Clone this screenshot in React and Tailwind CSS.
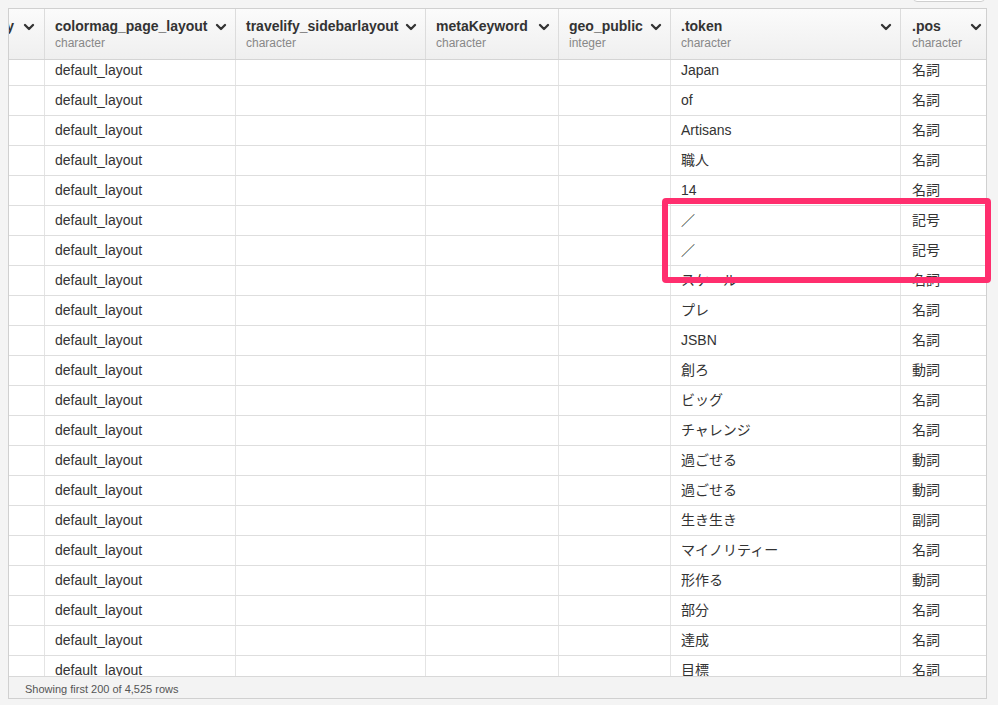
import React from 'react';
import { ChevronDown } from 'lucide-react';

const columns = [
  { name: 'colormag_page_layout', type: 'character' },
  { name: 'travelify_sidebarlayout', type: 'character' },
  { name: 'metaKeyword', type: 'character' },
  { name: 'geo_public', type: 'integer' },
  { name: '.token', type: 'character' },
  { name: '.pos', type: 'character', last: true },
];

const rows = [
  ['Japan', '名詞'],
  ['of', '名詞'],
  ['Artisans', '名詞'],
  ['職人', '名詞'],
  ['14', '名詞'],
  ['／', '記号'],
  ['／', '記号'],
  ['スケール', '名詞'],
  ['プレ', '名詞'],
  ['JSBN', '名詞'],
  ['創ろ', '動詞'],
  ['ビッグ', '名詞'],
  ['チャレンジ', '名詞'],
  ['過ごせる', '動詞'],
  ['過ごせる', '動詞'],
  ['生き生き', '副詞'],
  ['マイノリティー', '名詞'],
  ['形作る', '動詞'],
  ['部分', '名詞'],
  ['達成', '名詞'],
  ['目標', '名詞'],
];

const grid = 'grid grid-cols-[36px_191px_190px_133px_112px_230px_85px]';
const font = { fontFamily: '"Liberation Sans", Arial, "Noto Sans CJK JP", sans-serif' };

export default function App() {
  return (
    <div className="relative w-[998px] h-[705px] overflow-hidden bg-[#f4f4f4] pt-[8px] pl-[8px]" style={font}>
      {/* bit of a control peeking in from above */}
      <div className="absolute left-[913px] top-[-20px] w-[72px] h-[22px] rounded-[4px] border border-[#cfcfcf] bg-white" />

      <div className="w-[979px] h-[691px] flex flex-col border border-[#d0d0d0] bg-white">
        {/* header */}
        <div className={`${grid} h-[51px] border-b border-[#d4d4d4] bg-gradient-to-b from-[#fbfbfb] to-[#efefef]`}>
          {/* horizontally scrolled column, only its tail shows */}
          <div className="flex items-start justify-end overflow-hidden pt-[9px] pr-[7px] border-r border-[#dcdcdc]">
            <span className="shrink-0 text-[14px] font-bold leading-[17px] text-[#333] mr-[7px]">Category</span>
            <ChevronDown size={16} strokeWidth={3.5} className="mt-[1px] shrink-0 text-[#333]" />
          </div>
          {columns.map((c, i) => (
            <div key={i} className={`flex items-start justify-between gap-[4px] overflow-hidden pt-[9px] ${c.last ? 'pl-[11px] pr-[2px]' : 'pl-[10px] pr-[6px] border-r border-[#dcdcdc]'}`}>
              <div className="flex flex-col min-w-0">
                <span className="text-[14px] font-bold leading-[17px] text-[#333] whitespace-nowrap">{c.name}</span>
                <span className="text-[12px] leading-[16px] text-[#888]">{c.type}</span>
              </div>
              <ChevronDown size={16} strokeWidth={3.5} className="mt-[1px] shrink-0 text-[#333]" />
            </div>
          ))}
        </div>

        {/* body */}
        <div className="h-[616px] overflow-hidden">
          <div className="mt-[-4px]">
            {rows.map(([token, pos], i) => (
              <div key={i} className={`${grid} h-[30px] border-b border-[#dedede] text-[14px] text-[#333]`}>
                <div className="border-r border-[#e4e4e4]" />
                <div className="flex items-center pl-[10px] border-r border-[#e4e4e4]">default_layout</div>
                <div className="border-r border-[#e4e4e4]" />
                <div className="border-r border-[#e4e4e4]" />
                <div className="border-r border-[#e4e4e4]" />
                <div className="flex items-center pl-[10px] border-r border-[#e4e4e4]">{token}</div>
                <div className="flex items-center pl-[11px]">{pos}</div>
              </div>
            ))}
          </div>
        </div>

        {/* footer */}
        <div className="h-[22px] flex items-center border-t border-[#d8d8d8] bg-[#f3f3f3] pl-[16px] pt-[4px] text-[11px] text-[#555]">
          Showing first 200 of 4,525 rows
        </div>
      </div>

      {/* highlight */}
      <div className="absolute left-[662px] top-[198px] w-[329px] h-[85px] rounded-[4px] border-[6px] border-[#ff2e6e]" />
    </div>
  );
}
